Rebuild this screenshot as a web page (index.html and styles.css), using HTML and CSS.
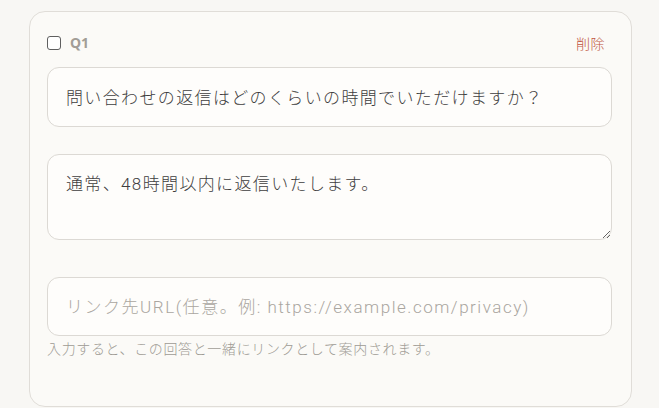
FILE: index.html
```html
<!DOCTYPE html>
<html lang="ja">
<head>
<meta charset="utf-8">
<link rel="stylesheet" href="styles.css">
</head>
<body>
<div class="card">
  <div class="card-head">
    <label class="q-label"><input type="checkbox" class="q-check"><span class="q-num">Q1</span></label>
    <button class="delete-btn" type="button">削除</button>
  </div>
  <input class="field field-q" type="text" value="問い合わせの返信はどのくらいの時間でいただけますか？">
  <textarea class="field field-a">通常、48時間以内に返信いたします。</textarea>
  <input class="field field-url" type="text" placeholder="リンク先URL(任意。例: https://example.com/privacy)">
  <p class="hint">入力すると、この回答と一緒にリンクとして案内されます。</p>
</div>
</body>
</html>
```
FILE: styles.css
```css
* { box-sizing: border-box; }
html, body { margin: 0; background: #f8f7f4; }
body {
  padding: 11px 27px 0 29px;
  font-family: Roboto, "Noto Sans CJK JP", sans-serif;
  color: #444;
}
.card {
  display: flex;
  flex-direction: column;
  background: #fbfaf7;
  border: 1px solid #e0ddd8;
  border-radius: 16px;
  padding: 16px 19px 46px 17px;
  height: 396px;
}
.card-head {
  display: flex;
  align-items: center;
  justify-content: space-between;
  height: 30px;
  margin-bottom: 9px;
}
.q-label { display: flex; align-items: center; gap: 9px; }
.q-check {
  appearance: none;
  width: 14px; height: 14px; margin: 0;
  border: 1.5px solid #5f5f5f;
  border-radius: 3px;
  background: #fff;
}
.q-num {
  font-family: "Noto Sans", "Noto Sans CJK JP", sans-serif;
  font-weight: 700;
  font-size: 14px;
  color: #a29d96;
}
.delete-btn {
  border: 0; background: none; padding: 0; margin-right: 7px;
  font-family: "Noto Sans CJK JP", sans-serif;
  font-weight: 300;
  font-size: 14px;
  letter-spacing: 0.04em;
  color: #c0533d;
}
.field {
  display: block;
  width: 100%;
  background: #fefdfb;
  border: 1px solid #dcd9d4;
  border-radius: 12px;
  font-family: Roboto, "Noto Sans CJK JP", sans-serif;
  font-weight: 300;
  font-size: 17px;
  letter-spacing: 0.08em;
  color: #3e3e3e;
  padding: 0 18px;
  outline: none;
}
.field-q { height: 60px; }
.field-a {
  height: 87px;
  margin-top: 27px;
  padding-top: 16px;
  line-height: 1.6;
  resize: vertical;
}
.field-url { height: 59px; margin-top: 37px; letter-spacing: 0.09em; }
.field-url::placeholder { color: #aaa6a0; }
.hint {
  margin: 3px 0 0 0;
  font-family: Roboto, "Noto Sans CJK JP", sans-serif;
  font-weight: 300;
  font-size: 14px;
  letter-spacing: 0.045em;
  line-height: 1.5;
  color: #9e9a94;
}
```
